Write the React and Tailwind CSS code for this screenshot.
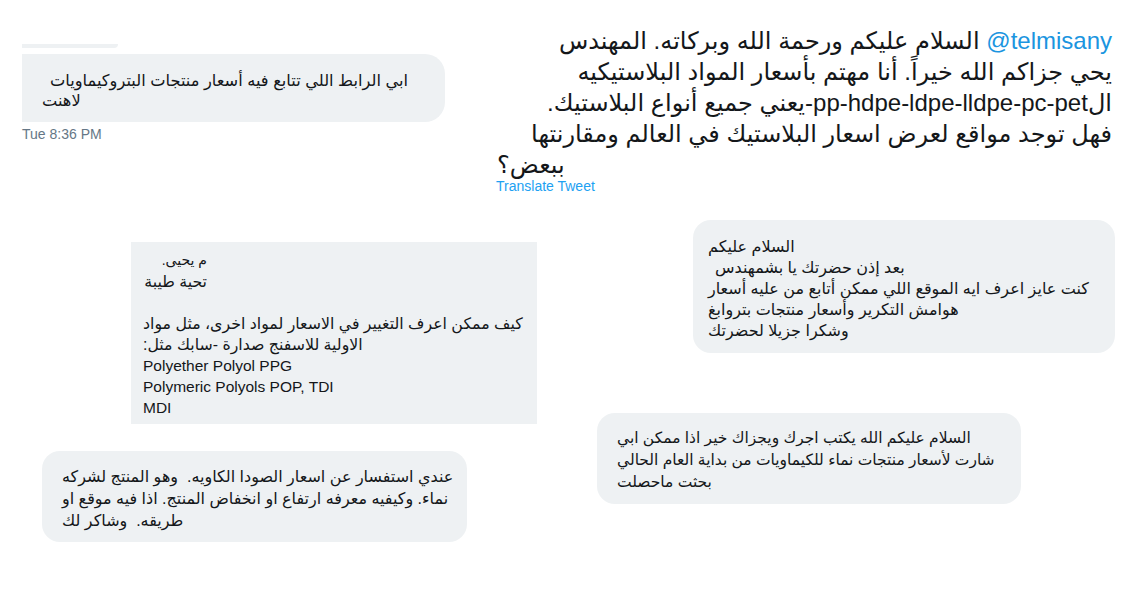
import React from "react";

const FONT = { fontFamily: '"Liberation Sans", "DejaVu Sans", sans-serif' };

function Line({ children, className = "" }) {
  return (
    <div dir="rtl" className={"whitespace-pre " + className}>
      {children}
    </div>
  );
}

export default function App() {
  return (
    <div
      className="relative w-[1126px] h-[594px] overflow-hidden bg-white text-[#14171a]"
      style={FONT}
    >
      {/* sliver of a previous bubble */}
      <div className="absolute left-[22px] top-[44px] w-[96px] h-[4px] rounded-br-[4px] bg-[#eef1f3]" />

      {/* bubble 1 */}
      <div className="absolute left-[22px] top-[54px] flex flex-col items-start">
        <div className="w-[423px] h-[68px] rounded-r-[20px] bg-[#eef1f3] pt-[16px] pl-[20px] text-[16.25px] leading-[20px]">
          <Line className="pl-[8px] w-fit">ابي الرابط اللي تتابع فيه أسعار منتجات البتروكيماويات</Line>
          <Line className="w-fit">لاهنت</Line>
        </div>
        <div className="mt-[4px] text-[14px] leading-[16px] text-[#657786]">Tue 8:36 PM</div>
      </div>

      {/* tweet */}
      <div className="absolute left-[497px] top-[25px] w-[615px]">
        <div className="text-[24px] leading-[31px]">
          <Line className="text-right">
            <bdi className="text-[#1b95e0]">@telmisany</bdi> السلام عليكم ورحمة الله وبركاته. المهندس
          </Line>
          <Line className="text-right">يحي جزاكم الله خيراً. أنا مهتم بأسعار المواد البلاستيكيه</Line>
          <Line className="text-right">الpp-hdpe-ldpe-lldpe-pc-pet-يعني جميع أنواع البلاستيك.</Line>
          <Line className="text-right">فهل توجد مواقع لعرض اسعار البلاستيك في العالم ومقارنتها</Line>
          <Line className="text-left">ببعض؟</Line>
        </div>
        <div className="-mt-[2px] -ml-[1px] text-[14px] leading-[16px] text-[#1da1f2]">Translate Tweet</div>
      </div>

      {/* bubble 2 (square) */}
      <div className="absolute left-[131px] top-[242px] w-[406px] h-[182px] bg-[#eef1f3] pt-[8px] pl-[12px] text-[15.8px] leading-[21px]">
        <div className="w-[64px]">
          <Line className="text-right text-[14px]">م يحيى.</Line>
          <Line className="text-right">تحية طيبة</Line>
        </div>
        <div className="h-[21px]" />
        <Line className="w-fit">كيف ممكن اعرف التغيير في الاسعار لمواد اخرى، مثل مواد</Line>
        <Line className="w-fit">الاولية للاسفنج صدارة -سابك مثل:</Line>
        <div className="text-[15.5px]">Polyether Polyol PPG</div>
        <div className="text-[15.5px]">Polymeric Polyols POP, TDI</div>
        <div className="text-[15.5px]">MDI</div>
      </div>

      {/* bubble 3 */}
      <div className="absolute left-[693px] top-[220px] w-[422px] h-[133px] rounded-[18px] bg-[#eef1f3] pt-[16px] pl-[15px] text-[16px] leading-[21px]">
        <Line className="w-fit">السلام عليكم</Line>
        <Line className="w-fit pl-[7px]">بعد إذن حضرتك يا بشمهندس</Line>
        <Line className="w-fit">كنت عايز اعرف ايه الموقع اللي ممكن أتابع من عليه أسعار</Line>
        <Line className="w-fit">هوامش التكرير وأسعار منتجات بتروابغ</Line>
        <Line className="w-fit">وشكرا جزيلا لحضرتك</Line>
      </div>

      {/* bubble 4 */}
      <div className="absolute left-[597px] top-[413px] w-[424px] h-[91px] rounded-[18px] bg-[#eef1f3] pt-[14px] pl-[20px] text-[15.5px] leading-[22px]">
        <Line className="w-fit">السلام عليكم الله يكتب اجرك ويجزاك خير اذا ممكن ابي</Line>
        <Line className="w-fit">شارت لأسعار منتجات نماء للكيماويات من بداية العام الحالي</Line>
        <Line className="w-fit">بحثت ماحصلت</Line>
      </div>

      {/* bubble 5 */}
      <div className="absolute left-[42px] top-[451px] w-[425px] h-[91px] rounded-[18px] bg-[#eef1f3] pt-[15px] pl-[20px] text-[16px] leading-[22px]">
        <Line className="w-fit">عندي استفسار عن اسعار الصودا الكاويه.  وهو المنتج لشركه</Line>
        <Line className="w-fit">نماء. وكيفيه معرفه ارتفاع او انخفاض المنتج. اذا فيه موقع او</Line>
        <Line className="w-fit">طريقه.  وشاكر لك</Line>
      </div>
    </div>
  );
}
